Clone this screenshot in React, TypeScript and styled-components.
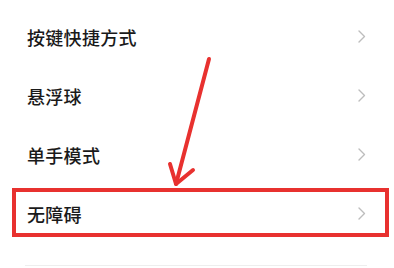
import styled, { createGlobalStyle } from "styled-components";

const GlobalStyle = createGlobalStyle`
    html, body {
        margin: 0;
        padding: 0;
        background: #ffffff;
    }
    body {
        font-family: "Noto Sans CJK SC", "Noto Sans", sans-serif;
    }
`;

const items = [
    { label: "按键快捷方式" },
    { label: "悬浮球" },
    { label: "单手模式" },
    { label: "无障碍", highlighted: true },
];

export default function App() {
    return (
        <>
            <GlobalStyle />
            <Page>
                <List>
                    {items.map((item) => (
                        <Row key={item.label} $highlighted={item.highlighted}>
                            <Label>{item.label}</Label>
                            <Chevron viewBox="0 0 8 13">
                                <path d="M1 1 L6.5 6.5 L1 12" />
                            </Chevron>
                        </Row>
                    ))}
                </List>
                <Divider />
                <Arrow viewBox="0 0 394 268">
                    <path d="M209 59 L176 184" />
                    <path d="M170 164 L176 184 L193 170" />
                </Arrow>
            </Page>
        </>
    );
}

const Page = styled.div`
    position: relative;
    width: 394px;
    height: 268px;
    overflow: hidden;
    padding-top: 7px;
    box-sizing: border-box;
    background: #ffffff;
`;

const List = styled.div`
    display: flex;
    flex-direction: column;
`;

const Row = styled.div<{ $highlighted?: boolean }>`
    position: relative;
    height: 59px;
    display: flex;
    align-items: center;
    justify-content: space-between;
    padding: 0 28px 0 27px;
    box-sizing: border-box;
    &::after {
        content: "";
        display: ${(p) => (p.$highlighted ? "block" : "none")};
        position: absolute;
        left: 12px;
        right: 5px;
        top: 4px;
        bottom: 6px;
        border: 4px solid #e8312f;
        pointer-events: none;
    }
`;

const Label = styled.span`
    font-size: 18px;
    line-height: 20px;
    font-weight: 500;
    color: #1a1a1a;
    letter-spacing: 0.3px;
`;

const Chevron = styled.svg`
    width: 8px;
    height: 13px;
    fill: none;
    stroke: #bdbdbd;
    stroke-width: 1.4;
    stroke-linecap: round;
    stroke-linejoin: round;
`;

const Divider = styled.div`
    margin: 22px 27px 0 25px;
    height: 1px;
    background: #eeeeee;
`;

const Arrow = styled.svg`
    position: absolute;
    left: 0;
    top: 0;
    width: 394px;
    height: 268px;
    fill: none;
    stroke: #e8312f;
    stroke-width: 4;
    stroke-linecap: round;
    stroke-linejoin: round;
    pointer-events: none;
`;
